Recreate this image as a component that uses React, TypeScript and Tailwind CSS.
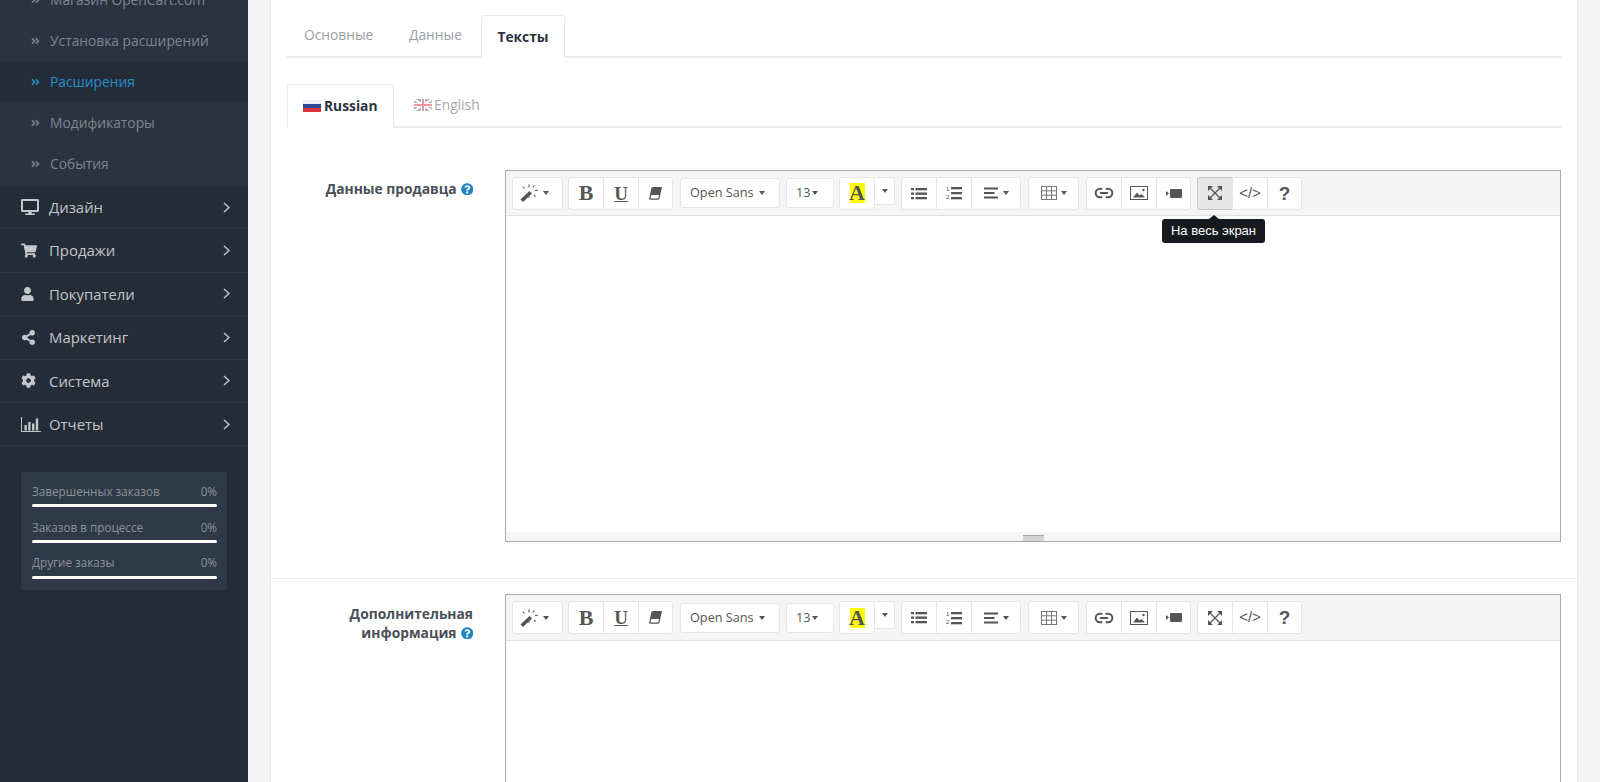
import React from "react";
import { FaAngleDoubleRight, FaCog, FaDesktop, FaQuestionCircle, FaShareAlt, FaShoppingCart, FaUser } from "react-icons/fa";
import { Link2 } from "lucide-react";

function Caret({ className = "" }: { className?: string }) {
  return <span className={"inline-block w-0 h-0 border-x-[3.5px] border-x-transparent border-t-[4px] border-t-[#555] " + className} />;
}

function BarChartIcon() {
  return (
    <svg width="20" height="15" viewBox="0 0 20 15" fill="currentColor">
      <path d="M0 0h1v14h19v1H0z" />
      <rect x="3.5" y="8" width="2.4" height="5.5" />
      <rect x="7.2" y="5" width="2.4" height="8.5" />
      <rect x="11" y="6.5" width="2.4" height="7" />
      <rect x="14.8" y="1.5" width="2.4" height="12" />
    </svg>
  );
}

function Chevron() {
  return (
    <svg width="7" height="11" viewBox="0 0 7 11" fill="none" stroke="currentColor" strokeWidth="1.5">
      <path d="M1 1l5 4.5-5 4.5" />
    </svg>
  );
}

function SubRow({ label, active, h = "h-[41px]" }: { label: string; active?: boolean; h?: string }) {
  return (
    <div className={`${h} flex items-center pl-[31px] text-[13.8px] ${active ? "bg-[#242c38] text-[#2a8ccb]" : "text-[#7f858d]"}`}>
      <FaAngleDoubleRight className="w-[9px] h-[12px] mr-[10px]" />
      <span>{label}</span>
    </div>
  );
}

function MainRow({ icon, label }: { icon: React.ReactNode; label: string }) {
  return (
    <div className="h-[43.4px] flex items-center border-b border-[#2a3442] text-[#c3c6ca] text-[14.9px] pl-[21px] pr-[18px]">
      <span className="w-[28px] flex items-center text-[#c3c6ca]">{icon}</span>
      <span className="flex-1">{label}</span>
      <Chevron />
    </div>
  );
}

function Stat({ label }: { label: string }) {
  return (
    <div className="h-[35.7px]">
      <div className="flex justify-between text-[11.7px] leading-[16px] text-[#8b929a] pt-[1.5px]">
        <span>{label}</span>
        <span>0%</span>
      </div>
      <div className="h-[3px] mt-[5.5px] bg-white rounded-full" />
    </div>
  );
}

function Sidebar() {
  return (
    <aside className="w-[248px] shrink-0 bg-[#242c37] overflow-hidden font-['Open_Sans',sans-serif]">
      <div className="-mt-[20.6px] bg-[#2a3342] border-b border-[#2a3442]">
        <SubRow label="Магазин OpenCart.com" />
        <SubRow label="Установка расширений" />
        <SubRow label="Расширения" active />
        <SubRow label="Модификаторы" />
        <SubRow label="События" h="h-[41.6px]" />
      </div>
      <MainRow icon={<FaDesktop className="w-[18px] h-[16px]" />} label="Дизайн" />
      <MainRow icon={<FaShoppingCart className="w-[16px] h-[15px]" />} label="Продажи" />
      <MainRow icon={<FaUser className="w-[13px] h-[14px]" />} label="Покупатели" />
      <MainRow icon={<FaShareAlt className="w-[15px] h-[15px]" />} label="Маркетинг" />
      <MainRow icon={<FaCog className="w-[15px] h-[15px]" />} label="Система" />
      <MainRow icon={<BarChartIcon />} label="Отчеты" />
      <div className="mt-[26px] mx-[21px] w-[206px] h-[118px] bg-[#2e3a47] rounded-[2px] pl-[11px] pr-[10px] pt-[9px]">
        <Stat label="Завершенных заказов" />
        <Stat label="Заказов в процессе" />
        <Stat label="Другие заказы" />
      </div>
    </aside>
  );
}

const Btn = ({ w = "w-[35px]", children, last, on, first }: { w?: string; children: React.ReactNode; last?: boolean; on?: boolean; first?: boolean }) => (
  <div
    className={`${w} h-[33px] flex items-center justify-center border-y border-l ${last ? "border-r rounded-r-[3px]" : ""} ${first ? "rounded-l-[3px]" : ""} ${on ? "bg-[#e6e6e6] border-[#c8c8c8]" : "bg-white border-[#e6e6e6]"} text-[#555]`}
  >
    {children}
  </div>
);

const Magic = () => (
  <svg width="20" height="18" viewBox="0 0 20 18" fill="#555">
    <path d="M0.5 15.5 9.5 7 12 9.5 3 18z" />
    <path d="M3 2.5l1.5 2M9 .5v3M14.5 1.5l-1.8 2M15 6.5l3-.3M14 11l1.5 1.5M8.5 12.5l1 1" stroke="#555" strokeWidth="1.1" fill="none" />
  </svg>
);
const Eraser = () => (
  <svg width="13" height="13" viewBox="0 0 13 13" fill="#555">
    <path d="M4 0h9l-2.5 11.5a1.5 1.5 0 0 1-1.4 1.2H1.5A1.3 1.3 0 0 1 .3 11L2.2 1.6A2 2 0 0 1 4 0zM2.3 8l-.7 3.4h7.6L10 8z" fillRule="evenodd" />
  </svg>
);
const UL = () => (
  <svg width="16" height="13" viewBox="0 0 16 13" fill="#555">
    <rect x="0" y="1" width="3" height="2.3" /><rect x="0" y="5.5" width="3" height="2.3" /><rect x="0" y="10" width="3" height="2.3" />
    <rect x="4.5" y="1" width="11.5" height="2.3" /><rect x="4.5" y="5.5" width="11.5" height="2.3" /><rect x="4.5" y="10" width="11.5" height="2.3" />
  </svg>
);
const OL = () => (
  <svg width="16" height="14" viewBox="0 0 16 14" fill="#555">
    <text x="0" y="5" fontSize="6" fontFamily="Liberation Sans, sans-serif">1</text>
    <text x="0" y="13" fontSize="6" fontFamily="Liberation Sans, sans-serif">2</text>
    <rect x="5" y="1" width="11" height="2.3" /><rect x="5" y="6" width="11" height="2.3" /><rect x="5" y="11" width="11" height="2.3" />
  </svg>
);
const AlignL = () => (
  <svg width="15" height="12" viewBox="0 0 15 12" fill="#555">
    <rect width="14" height="2" y="0.5" /><rect width="10.5" height="2" y="5" /><rect width="14" height="2" y="9.5" />
  </svg>
);
const TableI = () => (
  <svg width="16" height="14" viewBox="0 0 16 14" fill="none" stroke="#777" strokeWidth="1">
    <rect x=".5" y=".5" width="15" height="13" />
    <path d="M5.5.5v13M10.5.5v13M.5 4.8h15M.5 9.2h15" />
  </svg>
);
const Pic = () => (
  <svg width="18" height="14" viewBox="0 0 18 14" fill="#555">
    <path d="M0 0h18v14H0zM1 1v12h16V1z" fillRule="evenodd" />
    <path d="M3 11.5 7 6.5l2.5 3 2-1.5 3.5 3.5z" />
    <circle cx="13.5" cy="4" r="1.2" />
  </svg>
);
const Video = () => (
  <svg width="16" height="9" viewBox="0 0 16 9" fill="#555">
    <path d="M0 2 3 4.5 0 7z" />
    <rect x="4" y="0" width="12" height="9" rx="1" />
  </svg>
);
const Expand = () => (
  <svg width="14" height="14" viewBox="0 0 14 14" fill="#555">
    <path d="M2 2l10 10M12 2 2 12" stroke="#555" strokeWidth="1.2" />
    <path d="M0 0h5L0 5zM14 0v5L9 0zM0 14V9l5 5zM14 14H9l5-5z" />
  </svg>
);

function Toolbar({ active }: { active?: boolean }) {
  return (
    <div className={`flex items-center bg-[#f5f5f5] border-b border-[#e2e2e2] pl-[6px] ${active ? "h-[45px]" : "h-[46px]"}`}>
      <div className="flex mr-[5px]">
        <Btn w="w-[51px]" first last><span className="flex items-center gap-[3px] -ml-[7px]"><Magic /><Caret /></span></Btn>
      </div>
      <div className="flex mr-[7px]">
        <Btn first><span className="font-['Liberation_Serif',serif] font-bold text-[22px] leading-none">B</span></Btn>
        <Btn><span className="font-['Liberation_Serif',serif] font-bold text-[19px] leading-none underline">U</span></Btn>
        <Btn last><Eraser /></Btn>
      </div>
      <div className="mr-[6px] w-[100px] h-[30px] bg-white border border-[#e6e6e6] rounded-[3px] flex items-center pl-[9px] gap-[5px] text-[12.7px] text-[#555]">
        Open Sans <Caret />
      </div>
      <div className="mr-[5px] w-[48px] h-[30px] bg-white border border-[#e6e6e6] rounded-[3px] flex items-center pl-[9px] gap-[1px] text-[12.7px] text-[#555]">
        13<Caret />
      </div>
      <Btn w="w-[36px]" first last>
        <span className="bg-[#ffff00] w-[15px] h-[20px] flex items-center justify-center font-['Liberation_Serif',serif] font-bold text-[22px] leading-none text-[#555]">A</span>
      </Btn>
      <div className="w-[20px] h-[28px] -mt-[5px] mr-[6px] bg-white border-y border-r border-[#e6e6e6] rounded-r-[3px] flex items-center justify-center">
        <Caret />
      </div>
      <div className="flex mr-[7px]">
        <Btn first><UL /></Btn>
        <Btn><OL /></Btn>
        <Btn w="w-[50px]" last><span className="flex items-center gap-[4px]"><AlignL /><Caret /></span></Btn>
      </div>
      <div className="flex mr-[7px]">
        <Btn w="w-[51px]" first last><span className="flex items-center gap-[4px]"><TableI /><Caret /></span></Btn>
      </div>
      <div className="flex mr-[6px]">
        <Btn first><Link2 size={20} strokeWidth={2.4} color="#555" /></Btn>
        <Btn><Pic /></Btn>
        <Btn last><Video /></Btn>
      </div>
      <div className="flex relative">
        <Btn first on={active}><Expand /></Btn>
        <Btn><span className="font-['Liberation_Sans',sans-serif] text-[15px]">&lt;/&gt;</span></Btn>
        <Btn last><span className="font-['Liberation_Sans',sans-serif] font-bold text-[19px] leading-none">?</span></Btn>
        {active && (
          <div className="absolute top-[42px] -left-[35px] w-[103px] h-[24px] rounded-[3px] bg-[#16191d] text-white text-[13px] leading-[24px] text-center font-['Liberation_Sans',sans-serif] z-10">
            <span className="absolute left-[52px] -translate-x-1/2 -top-[4px] w-0 h-0 border-x-[5px] border-x-transparent border-b-[4px] border-b-[#16191d]" />
            На весь экран
          </div>
        )}
      </div>
    </div>
  );
}

function Help() {
  return <FaQuestionCircle className="inline-block w-[12.5px] h-[12.5px] text-[#1f84c8] ml-[4px] align-[-1px]" />;
}

const FlagRu = () => (
  <svg width="18" height="12" viewBox="0 0 18 12" className="inline-block">
    <rect width="18" height="4" fill="#eef0f4" />
    <rect width="18" y="4" height="4" fill="#2f4a96" />
    <rect width="18" y="8" height="4" fill="#d8323a" />
  </svg>
);
const FlagEn = () => (
  <svg width="18" height="12" viewBox="0 0 18 12" className="inline-block opacity-50">
    <rect width="18" height="12" fill="#666c88" />
    <path d="M0 0l18 12M18 0 0 12" stroke="#fff" strokeWidth="2" />
    <path d="M9 0v12M0 6h18" stroke="#fff" strokeWidth="4" />
    <path d="M9 0v12M0 6h18" stroke="#d8323a" strokeWidth="2" />
  </svg>
);

export default function App() {
  return (
    <div className="flex h-[782px] overflow-hidden bg-[#f5f5f5] font-['Open_Sans',sans-serif]">
      <Sidebar />
      <main className="flex-1 pl-[22px] pr-[22px] overflow-hidden">
        <div className="bg-white border-x border-[#e8e8e8] h-full pt-[15px]">
          <div className="ml-[16px] mr-[16px] flex h-[43px] border-b-2 border-[#ebebeb] text-[13.8px]">
            <div className="w-[105px] pl-[17px] h-[41px] flex items-center text-[#9ba0a6]">Основные</div>
            <div className="w-[89px] pl-[17px] h-[41px] flex items-center text-[#9ba0a6]">Данные</div>
            <div className="w-[84px] h-[43px] bg-white border border-b-0 border-[#ebebeb] rounded-t-[3px] flex items-center justify-center font-bold text-[#2c3340]">Тексты</div>
          </div>
          <div className="ml-[16px] mr-[16px] mt-[26px] flex h-[44px] border-b-2 border-[#ebebeb] text-[13.8px]">
            <div className="w-[107px] h-[44px] pb-[1px] bg-white border border-b-0 border-[#ebebeb] rounded-t-[3px] flex items-center pl-[15px] gap-[3px] font-bold text-[#2c3340]"><FlagRu />Russian</div>
            <div className="h-[42px] flex items-center ml-[20px] gap-[2px] text-[#a4a8ad]"><FlagEn />English</div>
          </div>
          <div className="flex mt-[42px] pb-[36px] border-b border-[#ececec] pr-[16px]">
            <div className="w-[234px] shrink-0 pr-[32px] text-right text-[13.8px] font-bold text-[#4a4f57] pt-[9px] leading-[19px]">Данные продавца<Help /></div>
            <div className="flex-1 h-[372px] border border-[#a9a9a9] flex flex-col">
              <Toolbar active />
              <div className="flex-1 bg-white" />
              <div className="h-[9px] bg-[#f5f5f5] flex justify-center items-end">
                <div className="w-[21px] h-[6px] bg-[#d4d4d4] border-t border-[#aaa]" />
              </div>
            </div>
          </div>
          <div className="flex mt-[15px] pr-[16px]">
            <div className="w-[234px] shrink-0 pr-[32px] text-right text-[13.8px] font-bold text-[#4a4f57] pt-[10px] leading-[19px]">Дополнительная<br />информация<Help /></div>
            <div className="flex-1 h-[300px] border border-[#a9a9a9] flex flex-col">
              <Toolbar />
              <div className="flex-1 bg-white" />
            </div>
          </div>
        </div>
      </main>
    </div>
  );
}
